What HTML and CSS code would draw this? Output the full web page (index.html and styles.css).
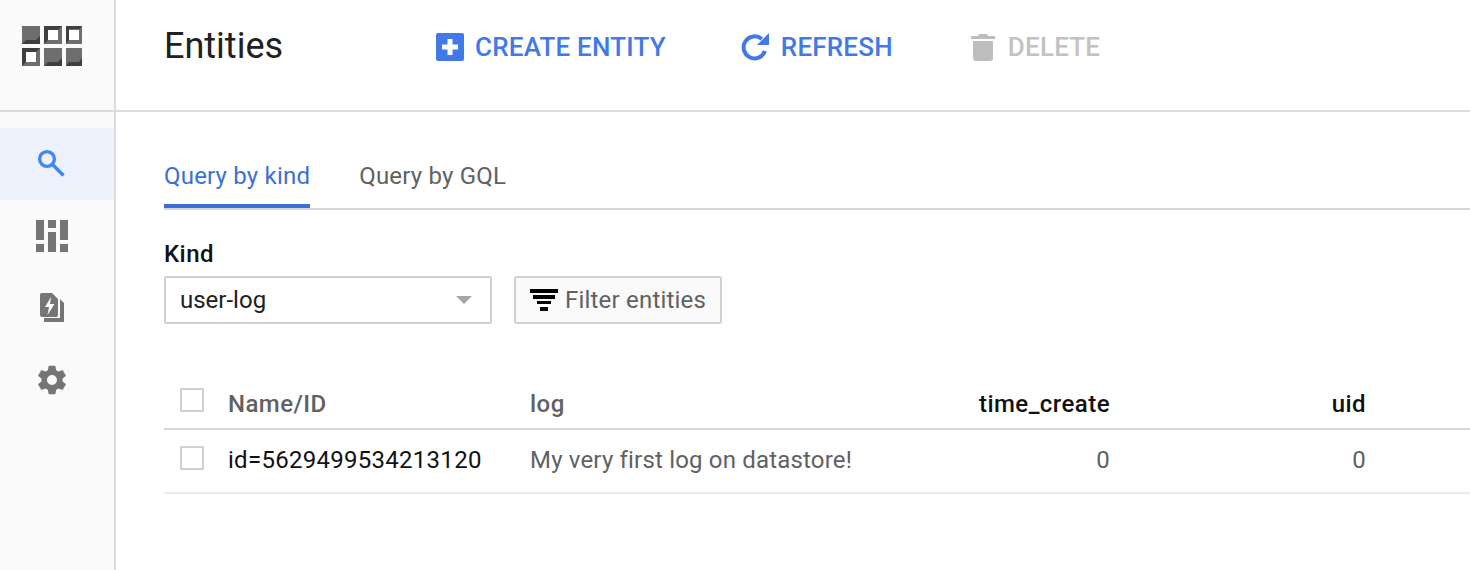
FILE: index.html
```html
<!DOCTYPE html>
<html>
<head>
  <meta charset="UTF-8">
  <title>Entities</title>
  <link rel="stylesheet" href="styles.css">
</head>
<body>
  <div class="app">
    <nav class="sidebar">
      <div class="logo">
        <svg width="60" height="40" viewBox="0 0 60 40">
          <rect class="cell" x="0" y="0" width="18" height="18"/>
          <path class="cell-dark" d="M0 18l4-4h10l4-4v8z"/>
          <rect class="cell" x="22" y="0" width="18" height="18"/>
          <path class="cell-dark" d="M22 0h18l-4 4h-10v10l-4 4z"/>
          <rect class="hole" x="26" y="4" width="10" height="10"/>
          <rect class="cell" x="44" y="0" width="16" height="18"/>
          <path class="cell-dark" d="M44 0h16l-2 3h-11v11l-3 4z"/>
          <rect class="hole" x="47" y="4" width="10" height="10"/>
          <rect class="cell" x="0" y="22" width="18" height="18"/>
          <path class="cell-dark" d="M0 22h18l-4 4h-10v10l-4 4z"/>
          <rect class="hole" x="4" y="26" width="10" height="10"/>
          <rect class="cell" x="22" y="22" width="18" height="18"/>
          <path class="cell-dark" d="M22 40l4-4h10l4-4v8z"/>
          <rect class="cell" x="44" y="22" width="16" height="18"/>
          <path class="cell-dark" d="M44 40l3-4h10l3-4v8z"/>
        </svg>
      </div>
      <div class="nav-list">
        <a class="nav-item active">
          <svg width="36" height="36" viewBox="0 0 36 36"><circle cx="13" cy="13" r="7.400" fill="none" stroke="#4285f4" stroke-width="3.400"/><path fill="none" stroke="#4285f4" stroke-width="3.400" d="M18.500 18.500l11 11"/></svg>
        </a>
        <a class="nav-item">
          <svg width="36" height="36" viewBox="0 0 36 36"><path fill="#757575" d="M2 2h8v20H2zM14 2h8v8h-8zM26 2h8v20h-8zM14 14h8v20h-8zM2 26h8v8H2zM26 26h8v8h-8z"/></svg>
        </a>
        <a class="nav-item">
          <svg width="36" height="36" viewBox="0 0 36 36"><path fill="#757575" d="M26 9l4 4v19H10v-4h16z"/><path fill="#757575" d="M8 3h10l6 6v16a2 2 0 0 1-2 2H8a2 2 0 0 1-2-2V5a2 2 0 0 1 2-2z"/><path fill="#fafafa" d="M17 7l-6 10h4l-1.500 8 7-11h-4.500z"/></svg>
        </a>
        <a class="nav-item">
          <svg width="34" height="34" viewBox="0 0 24 24"><path fill="#757575" d="M19.430 12.980c.04-.32.07-.64.07-.98s-.03-.66-.07-.98l2.110-1.650c.19-.15.24-.42.12-.64l-2-3.460c-.12-.22-.39-.3-.61-.22l-2.490 1c-.52-.4-1.080-.73-1.690-.98l-.38-2.650A.488.488 0 0 0 14 2h-4c-.25 0-.46.18-.49.42l-.38 2.650c-.61.25-1.170.59-1.690.98l-2.490-1c-.23-.09-.49 0-.61.22l-2 3.460c-.13.22-.07.49.12.64l2.110 1.650c-.04.32-.07.65-.07.98s.03.66.07.98l-2.110 1.650c-.19.15-.24.42-.12.64l2 3.460c.12.22.39.3.61.22l2.490-1c.52.4 1.080.73 1.690.98l.38 2.650c.03.24.24.42.49.42h4c.25 0 .46-.18.49-.42l.38-2.650c.61-.25 1.170-.59 1.690-.98l2.490 1c.23.09.49 0 .61-.22l2-3.460c.12-.22.07-.49-.12-.64l-2.110-1.650zM12 15.500c-1.930 0-3.500-1.570-3.500-3.500s1.570-3.500 3.500-3.500 3.500 1.570 3.500 3.500-1.570 3.500-3.500 3.500z"/></svg>
        </a>
      </div>
    </nav>

    <div class="main">
      <header class="topbar">
        <h1 class="page-title">Entities</h1>
        <div class="actions">
          <button class="action-btn create">
            <svg width="28" height="28" viewBox="0 0 28 28"><rect width="28" height="28" rx="2" fill="#4179e8"/><path fill="#fff" d="M11.500 6h5v5.500H22v5h-5.500V22h-5v-5.500H6v-5h5.500z"/></svg>
            CREATE ENTITY
          </button>
          <button class="action-btn refresh">
            <svg width="28" height="28" viewBox="0 0 28 28"><path fill="none" stroke="#4179e8" stroke-width="4" d="M24 18A11 11 0 1 1 20.800 6"/><path fill="#4179e8" d="M28 0v12H16z"/></svg>
            REFRESH
          </button>
          <button class="action-btn delete">
            <svg width="24" height="28" viewBox="0 0 24 28"><path fill="#bdbdbd" d="M2 8h20v17a3 3 0 0 1-3 3H5a3 3 0 0 1-3-3zM0 3h7l1-2h8l1 2h7v3H0z"/></svg>
            DELETE
          </button>
        </div>
      </header>

      <section class="content">
        <div class="tabs">
          <a class="tab active">Query by kind</a>
          <a class="tab">Query by GQL</a>
        </div>

        <label class="field-label">Kind</label>
        <div class="filters">
          <div class="kind-select">
            <span>user-log</span>
            <i class="caret"></i>
          </div>
          <button class="filter-btn">
            <svg width="28" height="22" viewBox="0 0 28 22"><path fill="#000" d="M0 0h28v4H0zM3 6h22v4H3zM7 12h14v3H7zM10 18h8v4h-8z"/></svg>
            Filter entities
          </button>
        </div>

        <table class="entities">
          <thead>
            <tr>
              <th class="col-check"><span class="checkbox"></span></th>
              <th class="col-name">Name/ID</th>
              <th class="col-log">log</th>
              <th class="col-time">time_create</th>
              <th class="col-uid">uid</th>
              <th class="col-rest"></th>
            </tr>
          </thead>
          <tbody>
            <tr>
              <td class="col-check"><span class="checkbox"></span></td>
              <td class="col-name">id=5629499534213120</td>
              <td class="col-log">My very first log on datastore!</td>
              <td class="col-time">0</td>
              <td class="col-uid">0</td>
              <td class="col-rest"></td>
            </tr>
          </tbody>
        </table>
      </section>
    </div>
  </div>
</body>
</html>
```

FILE: styles.css
```css
html, body {
  margin: 0;
  height: 570px;
  overflow: hidden;
}

body {
  font-family: Roboto, "Liberation Sans", sans-serif;
  color: #212121;
  background-color: #fff;
}

.app {
  display: flex;
  height: 570px;
}

/* left rail */
.sidebar {
  width: 114px;
  flex-shrink: 0;
  background-color: #fafafa;
  border-right: 2px solid #dcdcdc;
}

.logo {
  height: 110px;
  border-bottom: 2px solid #dcdcdc;
  display: flex;
  align-items: flex-start;
  padding-left: 22px;
}

.logo svg {
  margin-top: 26px;
}

.cell { fill: #6e6e6e; }
.cell-dark { fill: #3f3f3f; }
.hole { fill: #fff; }

.nav-list {
  padding-top: 16px;
}

.nav-item {
  display: flex;
  height: 72px;
  align-items: center;
  justify-content: center;
  padding-right: 10px;
}

.nav-item.active {
  background-color: #ecf1fc;
}

/* header */
.main {
  flex: 1;
  min-width: 0;
}

.topbar {
  height: 110px;
  border-bottom: 2px solid #dcdcdc;
  display: flex;
  align-items: center;
  padding-left: 48px;
}

.page-title {
  margin: 0 0 18px;
  width: 272px;
  flex-shrink: 0;
  font-size: 36px;
  font-weight: 400;
  color: #212121;
}

.actions {
  display: flex;
  gap: 75px;
  margin-bottom: 16px;
}

.action-btn {
  display: flex;
  align-items: center;
  gap: 11px;
  padding: 0;
  border: none;
  background: none;
  font-family: inherit;
  font-size: 26px;
  font-weight: 500;
  letter-spacing: .2px;
  color: #4179e8;
}

.action-btn.refresh {
  gap: 12px;
}

.action-btn.delete {
  gap: 13px;
  margin-left: 3px;
  letter-spacing: .2px;
  color: #c2c2c2;
}

/* main area */
.content {
  padding: 48px 0 0 48px;
}

.tabs {
  display: flex;
  gap: 49px;
  border-bottom: 2px solid #d6d6d6;
  height: 48px;
}

.tab {
  height: 48px;
  font-size: 24px;
  line-height: 32px;
  letter-spacing: .2px;
  color: #616161;
}

.tab.active {
  color: #3b6fd8;
  border-bottom: 4px solid #3b6fd8;
  height: 44px;
}

.field-label {
  display: block;
  margin-top: 28px;
  font-size: 24px;
  font-weight: 500;
  line-height: 32px;
  letter-spacing: .45px;
  color: #111;
}

.filters {
  display: flex;
  gap: 22px;
  margin-top: 6px;
}

.kind-select {
  width: 328px;
  height: 48px;
  box-sizing: border-box;
  border: 2px solid #d0d0d0;
  border-radius: 2px;
  padding: 0 18px 0 14px;
  display: flex;
  align-items: center;
  justify-content: space-between;
  font-size: 24px;
  color: #212121;
}

.caret {
  width: 0;
  height: 0;
  border-left: 8px solid transparent;
  border-right: 8px solid transparent;
  border-top: 8px solid #a6a6a6;
}

.filter-btn {
  width: 208px;
  height: 48px;
  box-sizing: border-box;
  border: 2px solid #d0d0d0;
  border-radius: 3px;
  background-color: #fafafa;
  padding: 0 0 0 14px;
  display: flex;
  align-items: center;
  gap: 7px;
  font-family: inherit;
  font-size: 24px;
  letter-spacing: .2px;
  color: #616161;
}

/* entity table */
.entities {
  margin-top: 48px;
  width: 1306px;
  border-collapse: separate;
  border-spacing: 0;
  table-layout: fixed;
  font-size: 24px;
}

.entities th {
  height: 48px;
  padding: 8px 0 0;
  text-align: left;
  font-weight: 500;
  letter-spacing: .45px;
  color: #616161;
  border-bottom: 2px solid #d6d6d6;
}

.entities td {
  height: 60px;
  padding: 0 0 2px;
  letter-spacing: .28px;
  white-space: nowrap;
  color: #616161;
  border-bottom: 2px solid #ebebeb;
}

.entities td.col-log {
  letter-spacing: .18px;
}

.entities th.col-check {
  height: 56px;
  padding: 0;
}

.entities td.col-check {
  height: 56px;
  padding: 0 0 6px;
}

.col-check { width: 64px; }
.col-name { width: 302px; }
.entities td.col-name { color: #111; }
.col-log { width: 300px; }

.entities .col-time,
.entities .col-uid {
  text-align: right;
}

.col-time { width: 280px; }
.col-uid { width: 256px; }
.entities th.col-time,
.entities th.col-uid { color: #111; }

.checkbox {
  display: block;
  width: 24px;
  height: 24px;
  box-sizing: border-box;
  margin-left: 16px;
  border: 2px solid #d0d0d0;
}
```
